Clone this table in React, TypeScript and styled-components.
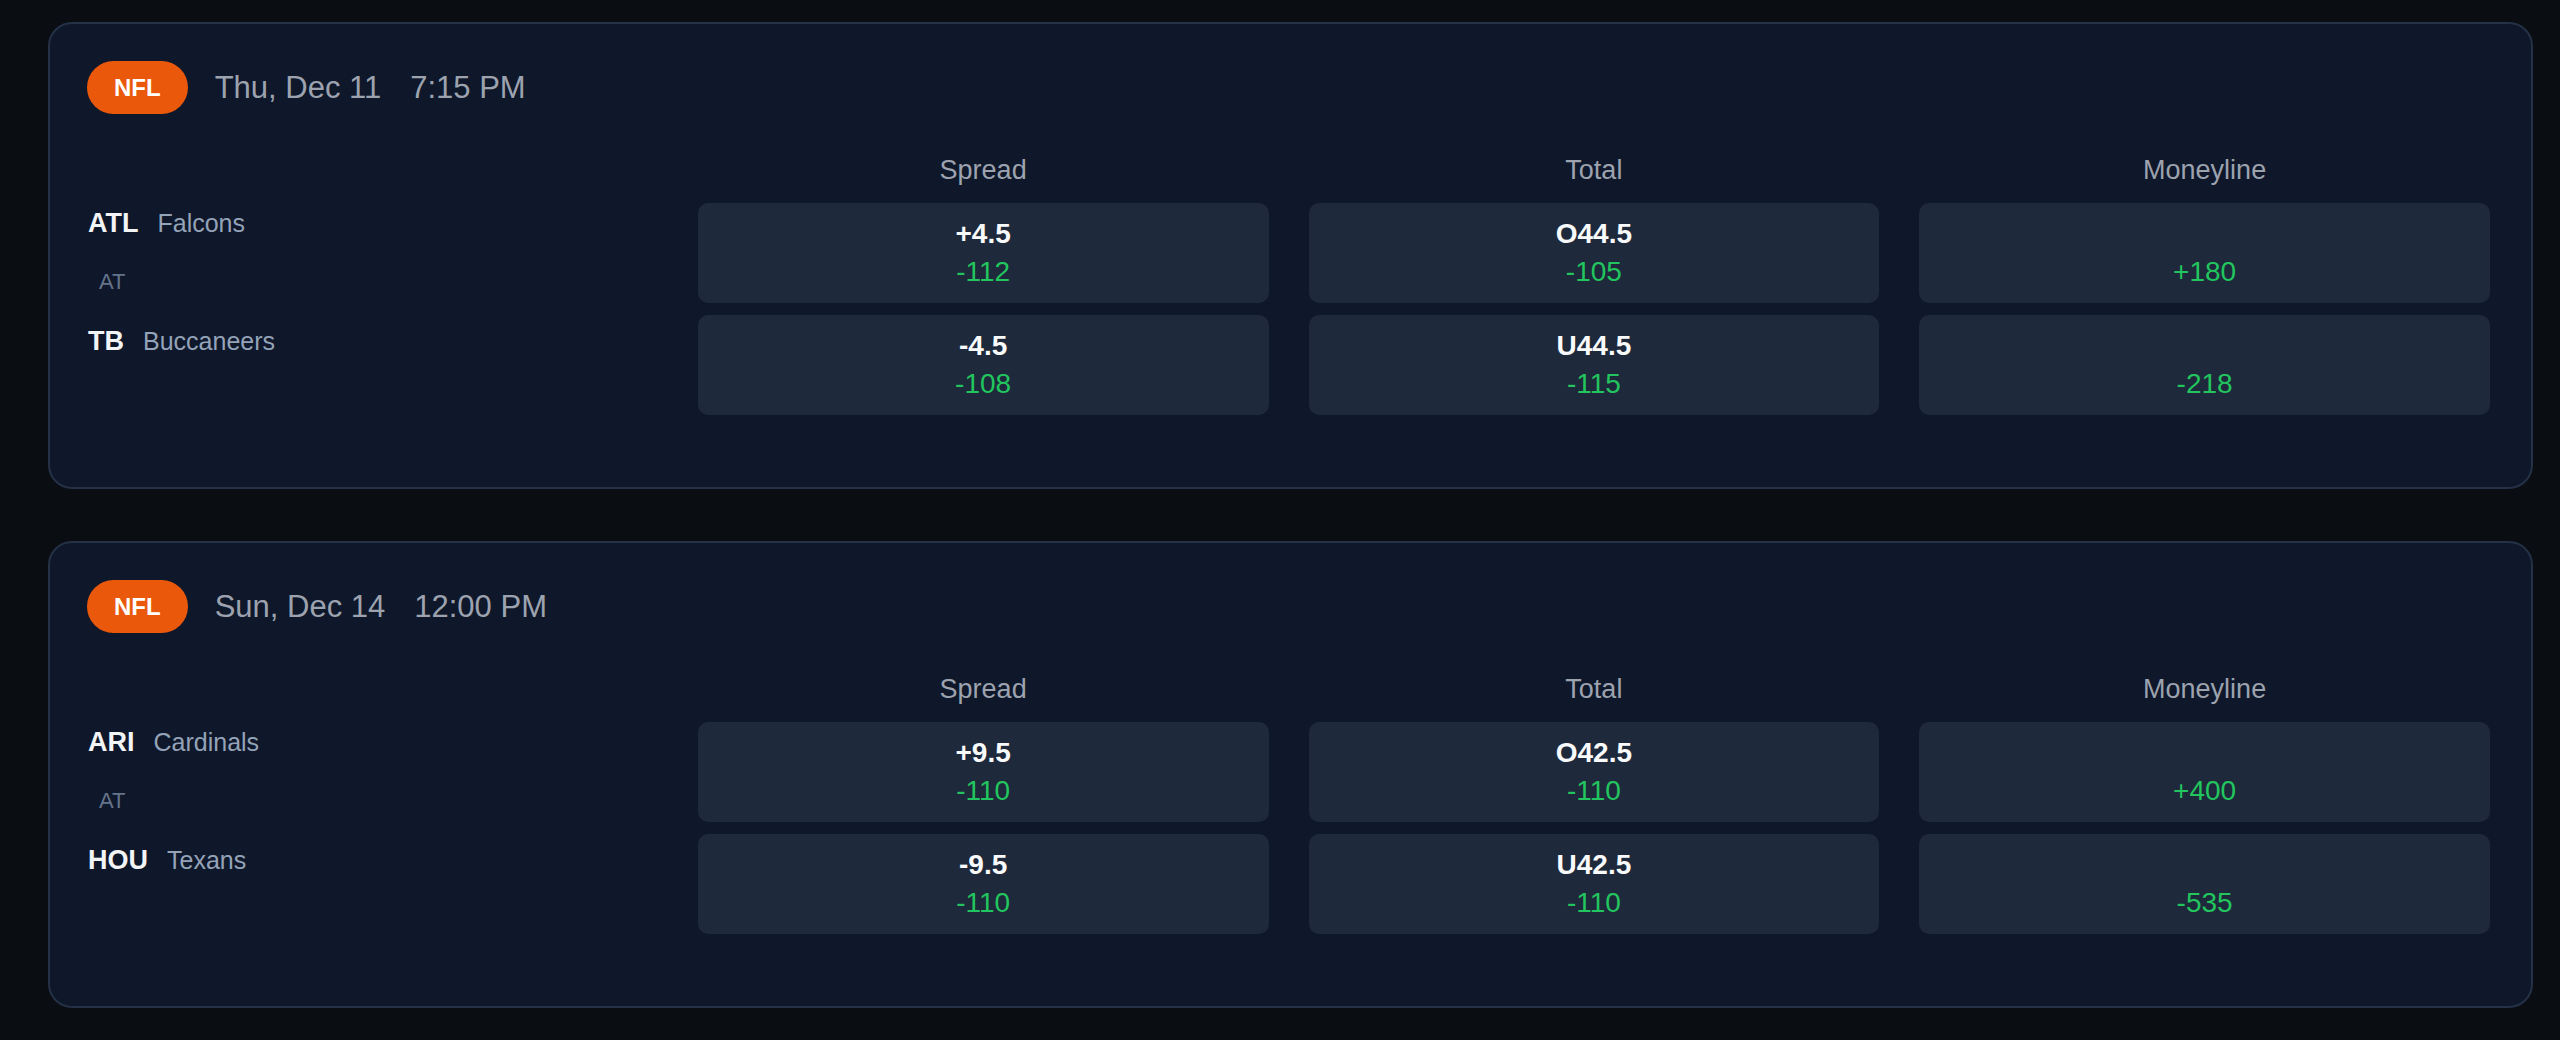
import React from "react";
import styled, { createGlobalStyle } from "styled-components";

const GlobalStyle = createGlobalStyle`
  html, body {
    margin: 0;
    padding: 0;
    background: #0a0d12;
    font-family: "Liberation Sans", Arial, sans-serif;
  }
`;

const Page = styled.div`
  display: flex;
  flex-direction: column;
  gap: 52px;
  padding: 22px 27px 28px 48px;
`;

const Card = styled.section`
  background: #0f172a;
  border: 2px solid #243146;
  border-radius: 24px;
  padding: 37px 41px 72px 37px;
`;

const Header = styled.div`
  display: flex;
  align-items: center;
  gap: 27px;
  height: 53px;
`;

const Badge = styled.span`
  display: inline-flex;
  align-items: center;
  justify-content: center;
  height: 53px;
  padding: 0 27px;
  border-radius: 27px;
  background: #ea580c;
  color: #ffffff;
  font-weight: 700;
  font-size: 24px;
`;

const DateText = styled.div`
  display: flex;
  gap: 29px;
  color: #9ca3af;
  font-size: 31px;
`;

const Markets = styled.div`
  display: grid;
  grid-template-columns: repeat(4, 1fr);
  grid-template-rows: auto 100px 100px;
  column-gap: 40px;
  row-gap: 12px;
  margin-top: 40px;
`;

const Label = styled.div<{ $col: number }>`
  grid-column: ${(p) => p.$col};
  grid-row: 1;
  text-align: center;
  color: #9ca3af;
  font-size: 27px;
  line-height: 32px;
  margin-bottom: 5px;
`;

const Teams = styled.div`
  grid-column: 1;
  grid-row: 2 / 4;
  display: flex;
  flex-direction: column;
  gap: 24px;
`;

const TeamLine = styled.div`
  display: flex;
  align-items: baseline;
  gap: 19px;
  line-height: 40px;
  padding-left: 1px;
`;

const Abbr = styled.span`
  color: #f3f4f6;
  font-weight: 700;
  font-size: 27px;
`;

const TeamName = styled.span`
  color: #94a3b8;
  font-size: 25px;
`;

const At = styled.div`
  padding-left: 12px;
  color: #64748b;
  font-size: 22px;
  line-height: 30px;
`;

const OddsBox = styled.div<{ $col: number; $row: number }>`
  grid-column: ${(p) => p.$col};
  grid-row: ${(p) => p.$row};
  background: #1e293b;
  border-radius: 10px;
  display: flex;
  flex-direction: column;
  align-items: center;
  justify-content: center;
`;

const Line = styled.div`
  height: 38px;
  line-height: 38px;
  color: #f8fafc;
  font-weight: 700;
  font-size: 28px;
`;

const Price = styled.div`
  height: 38px;
  line-height: 38px;
  color: #22c55e;
  font-weight: 500;
  font-size: 28px;
`;

type Side = { abbr: string; name: string; spread: string; spreadPrice: string; total: string; totalPrice: string; ml: string };
type Game = { day: string; time: string; away: Side; home: Side };

const games: Game[] = [
  {
    day: "Thu, Dec 11",
    time: "7:15 PM",
    away: { abbr: "ATL", name: "Falcons", spread: "+4.5", spreadPrice: "-112", total: "O44.5", totalPrice: "-105", ml: "+180" },
    home: { abbr: "TB", name: "Buccaneers", spread: "-4.5", spreadPrice: "-108", total: "U44.5", totalPrice: "-115", ml: "-218" },
  },
  {
    day: "Sun, Dec 14",
    time: "12:00 PM",
    away: { abbr: "ARI", name: "Cardinals", spread: "+9.5", spreadPrice: "-110", total: "O42.5", totalPrice: "-110", ml: "+400" },
    home: { abbr: "HOU", name: "Texans", spread: "-9.5", spreadPrice: "-110", total: "U42.5", totalPrice: "-110", ml: "-535" },
  },
];

const GameCard: React.FC<{ game: Game }> = ({ game }) => {
  const sides: [Side, number][] = [
    [game.away, 2],
    [game.home, 3],
  ];
  return (
    <Card>
      <Header>
        <Badge>NFL</Badge>
        <DateText>
          <span>{game.day}</span>
          <span>{game.time}</span>
        </DateText>
      </Header>
      <Markets>
        <Label $col={2}>Spread</Label>
        <Label $col={3}>Total</Label>
        <Label $col={4}>Moneyline</Label>
        <Teams>
          <TeamLine>
            <Abbr>{game.away.abbr}</Abbr>
            <TeamName>{game.away.name}</TeamName>
          </TeamLine>
          <At>AT</At>
          <TeamLine>
            <Abbr>{game.home.abbr}</Abbr>
            <TeamName>{game.home.name}</TeamName>
          </TeamLine>
        </Teams>
        {sides.map(([s, row]) => (
          <React.Fragment key={s.abbr}>
            <OddsBox $col={2} $row={row}>
              <Line>{s.spread}</Line>
              <Price>{s.spreadPrice}</Price>
            </OddsBox>
            <OddsBox $col={3} $row={row}>
              <Line>{s.total}</Line>
              <Price>{s.totalPrice}</Price>
            </OddsBox>
            <OddsBox $col={4} $row={row}>
              <Line />
              <Price>{s.ml}</Price>
            </OddsBox>
          </React.Fragment>
        ))}
      </Markets>
    </Card>
  );
};

export default function App() {
  return (
    <>
      <GlobalStyle />
      <Page>
        {games.map((g) => (
          <GameCard key={g.day} game={g} />
        ))}
      </Page>
    </>
  );
}
